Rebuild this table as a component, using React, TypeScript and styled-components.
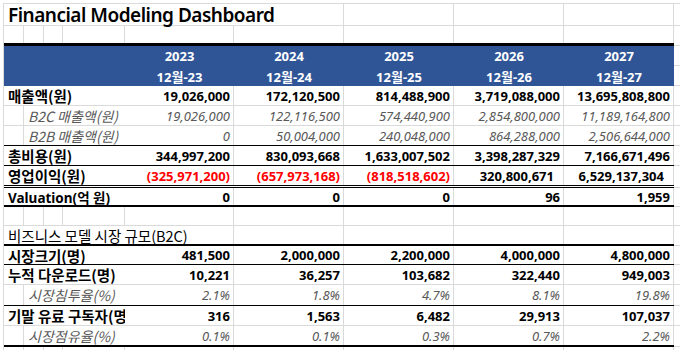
import React from 'react';
import styled, { createGlobalStyle } from 'styled-components';

const GRID = '#dadada';
const BLUE = '#2f5597';

// column widths A..I, each including its right gridline
const COLS = [20, 20, 19, 62, 109, 110, 110, 110, 110];
const LABEL_W = COLS[0] + COLS[1] + COLS[2] + COLS[3];

type Edge = 'grid' | 'thin' | 'double' | 'thick' | 'heavy' | 'none';

const EDGES: Record<Edge, string> = {
    grid: `1px solid ${GRID}`,
    thin: '1px solid #000',
    double: '3px double #000',
    thick: '2px solid #000',
    heavy: '3px solid #000',
    none: 'none',
};

const GlobalStyle = createGlobalStyle`
    html, body {
        margin: 0;
        padding: 0;
        background: #fff;
        overflow: hidden;
    }
    body {
        font-family: "Noto Sans", "Noto Sans CJK KR", sans-serif;
        font-size: 13px;
        color: #000;
    }
`;

const Sheet = styled.div`
    margin: 3px 0 0 3px;
    border-top: 1px solid ${GRID};
    border-left: 1px solid ${GRID};
    display: flex;
    flex-direction: column;
    width: 677px;
`;

const Row = styled.div<{ $h: number }>`
    display: flex;
    height: ${(p) => p.$h}px;
    flex: none;
`;

const Main = styled.div<{ $edge: Edge; $fill?: string }>`
    display: flex;
    flex: none;
    width: 670px;
    box-sizing: border-box;
    border-bottom: ${(p) => EDGES[p.$edge]};
    background: ${(p) => p.$fill || 'transparent'};
`;

const Tail = styled.div`
    flex: 1;
    box-sizing: border-box;
    border-bottom: 1px solid ${GRID};
`;

const Cell = styled.div<{ $w: number; $line?: boolean }>`
    width: ${(p) => p.$w}px;
    flex: none;
    box-sizing: border-box;
    border-right: ${(p) => (p.$line === false ? 'none' : `1px solid ${GRID}`)};
    display: flex;
    align-items: center;
    white-space: nowrap;
`;

const Title = styled(Cell)`
    padding-left: 4px;
    font-size: 19px;
    font-weight: 600;
    letter-spacing: -0.5px;
    overflow: visible;
`;

const Section = styled(Cell)`
    padding-left: 4px;
    font-family: "Noto Sans CJK KR", "Noto Sans", sans-serif;
    font-size: 14.5px;
    font-weight: 400;
`;

const Label = styled(Cell)<{ $sub?: boolean; $latin?: boolean }>`
    padding-left: 4px;
    overflow: hidden;
    font-family: ${(p) =>
        p.$latin ? '"Noto Sans", "Noto Sans CJK KR", sans-serif' : '"Noto Sans CJK KR", "Noto Sans", sans-serif'};
    font-size: ${(p) => (p.$latin ? 13.5 : p.$sub ? 14 : 14.5)}px;
    font-weight: ${(p) => (p.$sub ? 400 : 700)};
    font-style: ${(p) => (p.$sub ? 'italic' : 'normal')};
    color: ${(p) => (p.$sub ? '#595959' : '#000')};
`;

type Tone = 'strong' | 'sub' | 'neg';

const Value = styled(Cell)<{ $tone: Tone; $pad?: boolean }>`
    justify-content: flex-end;
    padding-right: ${(p) => (p.$pad ? 9 : 3)}px;
    font-weight: ${(p) => (p.$tone === 'sub' ? 400 : 700)};
    font-style: ${(p) => (p.$tone === 'sub' ? 'italic' : 'normal')};
    color: ${(p) => (p.$tone === 'sub' ? '#595959' : p.$tone === 'neg' ? '#ff0000' : '#000')};
`;

const HeadCell = styled(Cell)`
    justify-content: center;
    color: #fff;
    font-weight: 700;
`;

type DataRow = {
    label: string;
    values: string[];
    sub?: boolean;
    latin?: boolean;
    edge: Edge;
    h: number;
};

const YEARS = ['2023', '2024', '2025', '2026', '2027'];

const FINANCE: DataRow[] = [
    { label: '매출액(원)', values: ['19,026,000', '172,120,500', '814,488,900', '3,719,088,000', '13,695,808,800'], edge: 'grid', h: 20 },
    { label: 'B2C 매출액(원)', values: ['19,026,000', '122,116,500', '574,440,900', '2,854,800,000', '11,189,164,800'], sub: true, edge: 'grid', h: 20 },
    { label: 'B2B 매출액(원)', values: ['0', '50,004,000', '240,048,000', '864,288,000', '2,506,644,000'], sub: true, edge: 'thin', h: 20 },
    { label: '총비용(원)', values: ['344,997,200', '830,093,668', '1,633,007,502', '3,398,287,329', '7,166,671,496'], edge: 'thin', h: 20 },
    { label: '영업이익(원)', values: ['(325,971,200)', '(657,973,168)', '(818,518,602)', '320,800,671', '6,529,137,304'], edge: 'double', h: 22 },
    { label: 'Valuation(억 원)', values: ['0', '0', '0', '96', '1,959'], latin: true, edge: 'thick', h: 19 },
];

const MARKET: DataRow[] = [
    { label: '시장크기(명)', values: ['481,500', '2,000,000', '2,200,000', '4,000,000', '4,800,000'], edge: 'thin', h: 19 },
    { label: '누적 다운로드(명)', values: ['10,221', '36,257', '103,682', '322,440', '949,003'], edge: 'grid', h: 20 },
    { label: '시장침투율(%)', values: ['2.1%', '1.8%', '4.7%', '8.1%', '19.8%'], sub: true, edge: 'thin', h: 21 },
    { label: '기말 유료 구독자(명)', values: ['316', '1,563', '6,482', '29,913', '107,037'], edge: 'grid', h: 20 },
    { label: '시장점유율(%)', values: ['0.1%', '0.1%', '0.3%', '0.7%', '2.2%'], sub: true, edge: 'thick', h: 21 },
];

function EmptyRow({ h, edge }: { h: number; edge: Edge }) {
    return (
        <Row $h={h}>
            <Main $edge={edge}>
                {COLS.map((w, i) => <Cell key={i} $w={w} />)}
            </Main>
            <Tail />
        </Row>
    );
}

function Line({ row }: { row: DataRow }) {
    const hasNeg = row.values.some((v) => v.startsWith('('));
    return (
        <Row $h={row.h}>
            <Main $edge={row.edge}>
                {row.sub ? (
                    <>
                        <Cell $w={COLS[0]} />
                        <Label $w={LABEL_W - COLS[0]} $line={false} $sub>{row.label}</Label>
                    </>
                ) : (
                    <Label $w={LABEL_W} $line={false} $latin={row.latin}>{row.label}</Label>
                )}
                {row.values.map((v, i) => {
                    const neg = v.startsWith('(');
                    const tone: Tone = row.sub ? 'sub' : neg ? 'neg' : 'strong';
                    return (
                        <Value key={i} $w={COLS[4 + i]} $tone={tone} $pad={hasNeg && !neg}>
                            {v}
                        </Value>
                    );
                })}
            </Main>
            <Tail />
        </Row>
    );
}

export default function App() {
    return (
        <>
            <GlobalStyle />
            <Sheet>
                <Row $h={22}>
                    <Main $edge="grid">
                        <Title $w={COLS.slice(0, 6).reduce((a, b) => a + b, 0)}>Financial Modeling Dashboard</Title>
                        {COLS.slice(6).map((w, i) => <Cell key={i} $w={w} />)}
                    </Main>
                    <Tail />
                </Row>
                <EmptyRow h={20} edge="heavy" />
                <Row $h={20}>
                    <Main $edge="none" $fill={BLUE}>
                        <Cell $w={LABEL_W} $line={false} />
                        {YEARS.map((y, i) => <HeadCell key={y} $w={COLS[4 + i]} $line={false}>{y}</HeadCell>)}
                    </Main>
                    <Tail />
                </Row>
                <Row $h={20}>
                    <Main $edge="none" $fill={BLUE}>
                        <Cell $w={LABEL_W} $line={false} />
                        {YEARS.map((y, i) => <HeadCell key={y} $w={COLS[4 + i]} $line={false}>12월-{y.slice(2)}</HeadCell>)}
                    </Main>
                    <Tail />
                </Row>
                {FINANCE.map((r) => <Line key={r.label} row={r} />)}
                <EmptyRow h={19} edge="grid" />
                <Row $h={20}>
                    <Main $edge="thick">
                        <Section $w={LABEL_W + COLS[4]}>비즈니스 모델 시장 규모(B2C)</Section>
                        {COLS.slice(5).map((w, i) => <Cell key={i} $w={w} />)}
                    </Main>
                    <Tail />
                </Row>
                {MARKET.map((r) => <Line key={r.label} row={r} />)}
                <EmptyRow h={20} edge="grid" />
            </Sheet>
        </>
    );
}
